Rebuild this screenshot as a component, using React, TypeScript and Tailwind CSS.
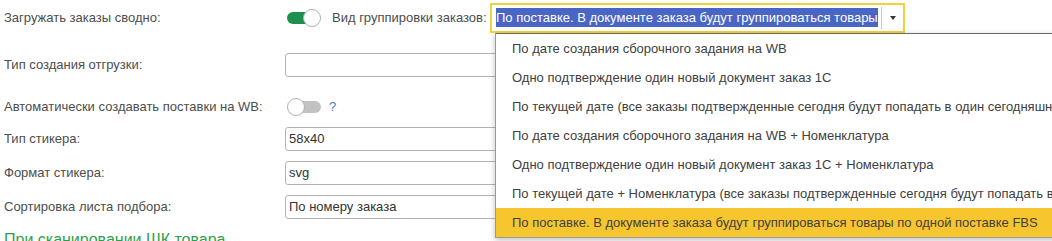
import React from "react";

const items = [
  "По дате создания сборочного задания на WB",
  "Одно подтверждение один новый документ заказ 1С",
  "По текущей дате (все заказы подтвержденные сегодня будут попадать в один сегодняшний документ заказ)",
  "По дате создания сборочного задания на WB + Номенклатура",
  "Одно подтверждение один новый документ заказ 1С + Номенклатура",
  "По текущей дате + Номенклатура (все заказы подтвержденные сегодня будут попадать в один документ)",
  "По поставке. В документе заказа будут группироваться товары по одной поставке FBS",
];

const Toggle = ({ on }: { on: boolean }) => (
  <div className="relative w-[34px] h-[18px] shrink-0">
    <div
      className={
        on
          ? "absolute left-0 right-[2px] top-[3px] h-[12px] rounded-full bg-[#1f8f4f]"
          : "absolute left-[2px] right-0 top-[3px] h-[12px] rounded-full bg-[#c2c2c2]"
      }
    />
    <div
      className={
        on
          ? "absolute right-0 top-0 w-[18px] h-[18px] rounded-full bg-white border border-[#b0b0b0]"
          : "absolute left-0 top-0 w-[18px] h-[18px] rounded-full bg-white border border-[#b0b0b0]"
      }
    />
  </div>
);

const Field = ({ value }: { value?: string }) => (
  <div className="w-[340px] h-[24px] border border-[#b3b3b3] rounded-[3px] bg-white flex items-center px-[3px] text-[#333]">
    {value}
  </div>
);

const Row = ({
  label,
  h,
  children,
}: {
  label: string;
  h: string;
  children?: React.ReactNode;
}) => (
  <div className={`flex items-center ${h}`}>
    <div className="w-[281px] shrink-0">{label}</div>
    {children}
  </div>
);

export default function App() {
  return (
    <div className="relative w-[1052px] h-[241px] overflow-hidden bg-white font-['Liberation_Sans',Arial,sans-serif] text-[13px] text-[#4d4d4d]">
      <div className="flex flex-col pl-[4px]">
        <Row label="Загружать заказы сводно:" h="h-[35px]">
          <div className="ml-[2px]">
            <Toggle on />
          </div>
          <span className="ml-[11px] w-[158px] shrink-0">Вид группировки заказов:</span>
          <div className="w-[415px] h-[30px] border-2 border-[#f2d23c] bg-white flex items-center pl-[4px]">
            <span className="bg-[#4a66c4] text-white leading-[19px] pr-[2px] whitespace-nowrap overflow-hidden w-[382px]">
              По поставке. В документе заказа будут группироваться товары
            </span>
            <div className="ml-[3px] h-[22px] border-l border-[#c8c8c8] flex-1 flex items-center justify-center">
              <span className="block w-0 h-0 border-l-[3px] border-r-[3px] border-t-[4px] border-l-transparent border-r-transparent border-t-[#333]" />
            </div>
          </div>
        </Row>
        <Row label="Тип создания отгрузки:" h="h-[60px]">
          <Field />
        </Row>
        <Row label="Автоматически создавать поставки на WB:" h="h-[24px]">
          <div className="ml-[2px]">
            <Toggle on={false} />
          </div>
          <span className="ml-[8px] text-[#3c82c0]">?</span>
        </Row>
        <Row label="Тип стикера:" h="h-[40px]">
          <Field value="58x40" />
        </Row>
        <Row label="Формат стикера:" h="h-[28px]">
          <Field value="svg" />
        </Row>
        <Row label="Сортировка листа подбора:" h="h-[40px]">
          <Field value="По номеру заказа" />
        </Row>
        <div className="mt-[4px] text-[16px] leading-[18px] text-[#2f9e4b] whitespace-nowrap">
          При сканировании ШК товара
        </div>
      </div>

      <div className="absolute left-[495px] top-[33px] w-[620px] bg-white border border-[#9a9a9a] border-t-[#6a6a6a] shadow-[0_2px_6px_rgba(0,0,0,0.25)] text-[#404040]">
        {items.map((t, i) => (
          <div
            key={i}
            className={
              i === items.length - 1
                ? "h-[29px] flex items-center pl-[16px] whitespace-nowrap bg-[#f7c62f]"
                : "h-[29px] flex items-center pl-[16px] whitespace-nowrap"
            }
          >
            {t}
          </div>
        ))}
      </div>
    </div>
  );
}
